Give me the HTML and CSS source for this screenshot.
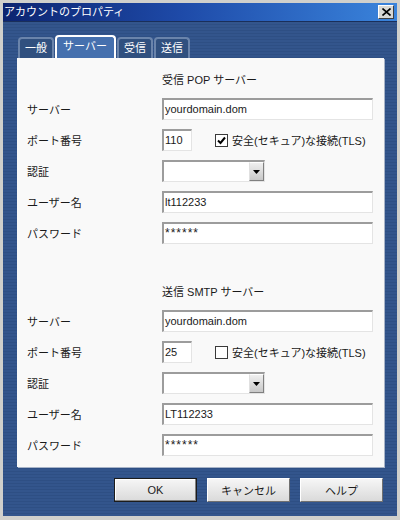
FILE: index.html
```html
<!DOCTYPE html>
<html lang="ja">
<head>
    <meta charset="UTF-8">
    <title>アカウントのプロパティ</title>
    <link rel="stylesheet" href="styles.css">
</head>
<body>
    <div class="window">
        <div class="titlebar">
            <span class="title">アカウントのプロパティ</span>
            <span class="close-btn">
                <svg width="9" height="8" viewBox="0 0 9 8"><path d="M0.5 0.5 L8.5 7.5 M8.5 0.5 L0.5 7.5" stroke="#000" stroke-width="1.6"/></svg>
            </span>
        </div>

        <div class="client">
            <div class="tabs">
                <div class="tab">一般</div>
                <div class="tab active">サーバー</div>
                <div class="tab">受信</div>
                <div class="tab">送信</div>
            </div>

            <div class="panel">
                <!-- 受信 -->
                <div class="section">
                    <div class="heading">受信 POP サーバー</div>
                    <label>サーバー</label>
                    <div class="field">yourdomain.dom</div>
                    <label>ポート番号</label>
                    <div class="port-row">
                        <div class="field port">110</div>
                        <span class="check checked">
                            <svg width="9" height="9" viewBox="0 0 9 9"><path d="M1 4.5 L3.5 7 L8 1.5" fill="none" stroke="#000" stroke-width="2"/></svg>
                        </span>
                        <span class="check-label">安全(セキュア)な接続(TLS)</span>
                    </div>
                    <label>認証</label>
                    <div class="select">
                        <span class="select-btn"><svg width="7" height="4" viewBox="0 0 7 4"><path d="M0 0 H7 L3.5 4 Z" fill="#000"/></svg></span>
                    </div>
                    <label>ユーザー名</label>
                    <div class="field">lt112233</div>
                    <label>パスワード</label>
                    <div class="field pw">******</div>
                </div>

                <!-- 送信 -->
                <div class="section second">
                    <div class="heading">送信 SMTP サーバー</div>
                    <label>サーバー</label>
                    <div class="field">yourdomain.dom</div>
                    <label>ポート番号</label>
                    <div class="port-row">
                        <div class="field port">25</div>
                        <span class="check"></span>
                        <span class="check-label">安全(セキュア)な接続(TLS)</span>
                    </div>
                    <label>認証</label>
                    <div class="select">
                        <span class="select-btn"><svg width="7" height="4" viewBox="0 0 7 4"><path d="M0 0 H7 L3.5 4 Z" fill="#000"/></svg></span>
                    </div>
                    <label>ユーザー名</label>
                    <div class="field">LT112233</div>
                    <label>パスワード</label>
                    <div class="field pw">******</div>
                </div>
            </div>

            <div class="buttons">
                <button class="btn default">OK</button>
                <button class="btn">キャンセル</button>
                <button class="btn">ヘルプ</button>
            </div>
        </div>
    </div>
</body>
</html>
```

FILE: styles.css
```css
:root {
    --frame: #d0d0cc;
    --blue: #33558c;
    --blue-dark: #2e4f84;
    --panel: #f9f9f9;
    --text: #1a1a1a;
    --field-dark: #9c9c9c;
    --field-light: #e4e4e4;
}

* {
    box-sizing: border-box;
}

body {
    margin: 0;
    font-family: "Liberation Sans", "Noto Sans CJK JP", sans-serif;
    font-size: 11px;
    color: var(--text);
    background: var(--frame);
}

.window {
    width: 400px;
    height: 520px;
    border: 3px solid var(--frame);
    border-bottom-width: 4px;
    box-shadow: inset 1px 1px 0 #ffffff;
    display: flex;
    flex-direction: column;
}

.titlebar {
    height: 18px;
    background: linear-gradient(to right, #0c2470 0%, #1e4aa8 45%, #3a84dc 100%);
    color: #ffffff;
    display: flex;
    align-items: center;
    justify-content: space-between;
    padding: 0 3px 0 1px;
}

.title {
    font-size: 11px;
    line-height: 18px;
}

.close-btn {
    width: 16px;
    height: 14px;
    background: #d8d8d4;
    border: 1px solid;
    border-color: #ffffff #404040 #404040 #ffffff;
    display: flex;
    align-items: center;
    justify-content: center;
}

.client {
    flex: 1;
    background: repeating-linear-gradient(to bottom, var(--blue) 0, var(--blue) 2px, var(--blue-dark) 2px, var(--blue-dark) 3px);
    border-top: 1px solid #1a2f5a;
    padding: 13px 13px 0 14px;
    display: flex;
    flex-direction: column;
}

/* tabs */
.tabs {
    display: flex;
    align-items: flex-end;
    gap: 1px;
    height: 23px;
    padding-left: 1px;
}

.tab {
    height: 21px;
    padding: 0 5px;
    color: #ffffff;
    background: #30507f;
    border: 2px solid #6a84ab;
    border-bottom: none;
    border-radius: 4px 4px 0 0;
    line-height: 19px;
}

.tab.active {
    height: 23px;
    padding: 0 7px 0 6px;
    background: #4570ae;
    border-color: #ffffff;
    line-height: 19px;
}

/* panel */
.panel {
    height: 409px;
    background: var(--panel);
    padding: 9px 11px 0 10px;
    box-shadow: 1px 1px 0 #a8b4c8;
}

.section {
    display: grid;
    grid-template-columns: 135px 1fr;
    grid-auto-rows: 22px;
    row-gap: 9px;
    align-items: center;
}

.section.second {
    margin-top: 35px;
}

.heading {
    grid-column: 2;
    height: 16px;
    line-height: 16px;
    margin-bottom: -4px;
}

label {
    grid-column: 1;
}

.field {
    height: 22px;
    background: #ffffff;
    border-style: solid;
    border-width: 2px 1px 1px 2px;
    border-color: var(--field-dark) var(--field-light) var(--field-light) var(--field-dark);
    padding-left: 1px;
    line-height: 19px;
    white-space: nowrap;
}

.field.pw {
    font-size: 12px;
    letter-spacing: 1px;
}

.port-row {
    display: flex;
    align-items: center;
    white-space: nowrap;
}

.field.port {
    width: 30px;
}

.check {
    flex: none;
    width: 13px;
    height: 13px;
    margin-left: 23px;
    background: #ffffff;
    border: 1px solid #3a3a3a;
    display: flex;
    align-items: center;
    justify-content: center;
}

.check-label {
    margin-left: 4px;
}

.select {
    width: 103px;
    height: 22px;
    background: #ffffff;
    border-style: solid;
    border-width: 2px 1px 1px 2px;
    border-color: var(--field-dark) var(--field-light) var(--field-light) var(--field-dark);
    display: flex;
    justify-content: flex-end;
}

.select-btn {
    width: 15px;
    background: linear-gradient(#f0f0f0, #c8c8c8);
    border: 1px solid;
    border-color: #ffffff #808080 #808080 #e0e0e0;
    display: flex;
    align-items: center;
    justify-content: center;
}

/* buttons */
.buttons {
    display: flex;
    justify-content: flex-end;
    gap: 10px;
    margin-top: 11px;
    padding-right: 1px;
}

.btn {
    width: 83px;
    height: 24px;
    font-family: inherit;
    font-size: 11px;
    color: var(--text);
    background: linear-gradient(#f6f6f6, #dadada);
    border: 1px solid;
    border-color: #ffffff #707070 #707070 #ffffff;
    padding: 0;
}

.btn.default {
    border: 1px solid #1c1c1c;
    box-shadow: inset -1px -1px 0 #808080, inset 1px 1px 0 #ffffff;
}
```
